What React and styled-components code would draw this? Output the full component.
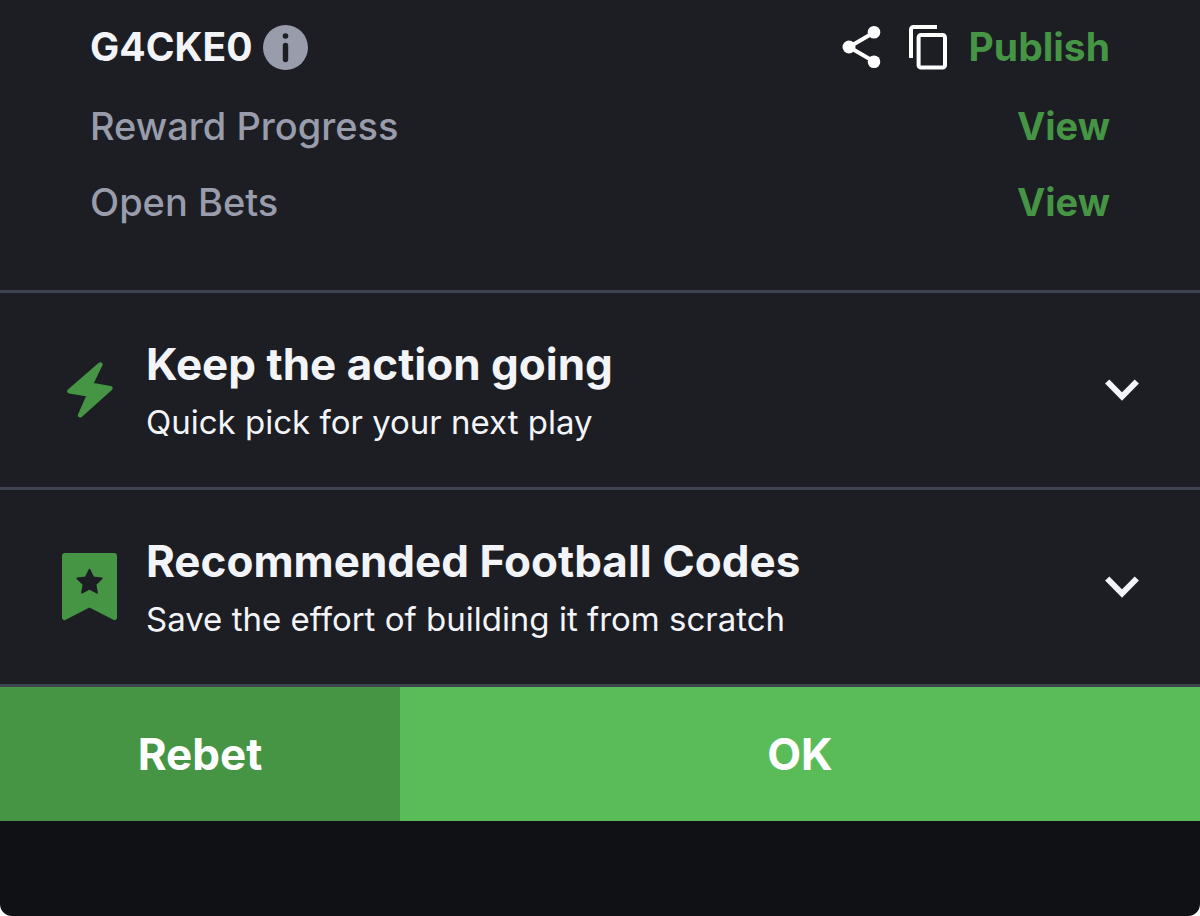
import React from "react";
import styled, { createGlobalStyle } from "styled-components";

const color = {
  panel: "#1c1e24",
  base: "#101114",
  line: "#3f424f",
  text: "#f3f4f8",
  muted: "#989cab",
  green: "#459545",
  bright: "#5abb59",
};

const GlobalStyle = createGlobalStyle`
  * { box-sizing: border-box; }
  body { margin: 0; background: #fff; }
  button { font: inherit; color: inherit; border: 0; padding: 0; background: none; cursor: pointer; }
  svg { display: block; flex: none; }
`;

const Sheet = styled.main`
  display: flex;
  flex-direction: column;
  min-height: 100vh;
  background: ${color.base};
  border-radius: 0 0 12px 12px;
  overflow: hidden;
  font-family: Inter, "Liberation Sans", sans-serif;
  color: ${color.text};
`;

const Summary = styled.section`
  display: flex;
  flex-direction: column;
  gap: 28px;
  padding: 20px 90px 64px;
  background: ${color.panel};
`;

const SummaryRow = styled.div`
  display: flex;
  align-items: center;
  justify-content: space-between;
  height: ${(p) => (p.$head ? 54 : 48)}px;
  font-size: ${(p) => (p.$head ? 39 : 38)}px;
  line-height: 48px;
`;

const Code = styled.div`
  display: flex;
  align-items: center;
  gap: 10px;
  font-weight: 700;
`;

const Actions = styled.div`
  display: flex;
  align-items: center;
`;

const IconButton = styled.button`
  margin-right: ${(p) => p.$gap || 0}px;
`;

const Label = styled.span`
  font-weight: 500;
  color: ${color.muted};
`;

const TextButton = styled.button`
  && { font-weight: 700; color: ${color.green}; }
`;

const AccordionHeader = styled.button`
  && {
    display: flex;
    align-items: center;
    gap: 29px;
    width: 100%;
    min-height: 197px;
    padding: 0 61px 0 62px;
    border-top: 3px solid ${color.line};
    background: ${color.panel};
    text-align: left;
  }
`;

const IconSlot = styled.span`
  display: flex;
  justify-content: center;
  width: 55px;
`;

const Copy = styled.span`
  display: flex;
  flex-direction: column;
  flex: 1;
  gap: 10px;
  padding-top: 2px;
`;

const Title = styled.span`
  font-size: 44px;
  line-height: 52px;
  font-weight: 700;
`;

const Subtitle = styled.span`
  font-size: 33px;
  line-height: 44px;
`;

const Footer = styled.footer`
  display: grid;
  grid-template-columns: 1fr 2fr;
  border-top: 3px solid ${color.line};
`;

const FooterButton = styled.button`
  && {
    height: 134px;
    font-size: 44px;
    font-weight: 700;
    color: #fff;
    background: ${(p) => (p.$primary ? color.bright : color.green)};
  }
`;

const InfoIcon = () => (
  <svg width="45" height="45" viewBox="0 0 45 45" aria-hidden="true">
    <circle cx="22.5" cy="22.5" r="22.5" fill={color.muted} />
    <circle cx="22.5" cy="11" r="2.8" fill={color.panel} />
    <path d="M22.5 20.5v14" stroke={color.panel} strokeWidth="5.4" strokeLinecap="round" />
  </svg>
);

const ShareIcon = () => (
  <svg width="39" height="44" viewBox="0 0 39 44" aria-hidden="true">
    <path d="M32 7.5 7 22l25 14.5" fill="none" stroke="#fff" strokeWidth="4" />
    <g fill="#fff">
      <circle cx="32" cy="7.3" r="6.3" />
      <circle cx="7" cy="22" r="6.5" />
      <circle cx="32" cy="36.8" r="6.3" />
    </g>
  </svg>
);

const CopyIcon = () => (
  <svg width="38" height="45" viewBox="0 0 38 45" fill="none" stroke="#fff" strokeWidth="4" aria-hidden="true">
    <path d="M2 33V4.5A2.5 2.5 0 0 1 4.5 2H28" />
    <rect x="9.6" y="10" width="26.4" height="32.6" rx="2.4" />
  </svg>
);

const BoltIcon = () => (
  <svg width="46" height="56" viewBox="0 0 46 56" aria-hidden="true">
    <path
      d="M33.3 2.6 2.5 29.3l19.8 3.2L13.2 53.2 43.3 26.3 23.5 22.7Z"
      fill={color.green}
      stroke={color.green}
      strokeWidth="4.6"
      strokeLinejoin="round"
    />
  </svg>
);

const BookmarkIcon = () => (
  <svg width="55" height="68" viewBox="0 0 55 68" aria-hidden="true">
    <path
      d="M3 0h49a3 3 0 0 1 3 3v61.5a2.5 2.5 0 0 1-3.7 2.3L27.5 54.5 3.7 66.8A2.5 2.5 0 0 1 0 64.5V3a3 3 0 0 1 3-3Z"
      fill={color.green}
    />
    <path
      d="m27.5 16.5 3.8 7.7 8.5 1.200-6.200 6 1.500 8.500-7.600-4-7.600 4 1.500-8.500-6.200-6 8.500-1.200Z"
      fill={color.panel}
      stroke={color.panel}
      strokeWidth="1.6"
      strokeLinejoin="round"
    />
  </svg>
);

const ChevronIcon = () => (
  <svg width="34" height="22" viewBox="0 0 34 22" aria-hidden="true">
    <path d="M2.2 2.5 17 17.5 31.8 2.5" fill="none" stroke={color.text} strokeWidth="6" />
  </svg>
);

const offers = [
  { icon: BoltIcon, title: "Keep the action going", subtitle: "Quick pick for your next play" },
  { icon: BookmarkIcon, title: "Recommended Football Codes", subtitle: "Save the effort of building it from scratch" },
];

export default function App() {
  return (
    <>
      <GlobalStyle />
      <Sheet>
        <Summary>
          <SummaryRow $head>
            <Code>
              G4CKE0
              <IconButton type="button" aria-label="Booking code information"><InfoIcon /></IconButton>
            </Code>
            <Actions>
              <IconButton type="button" aria-label="Share" $gap={28}><ShareIcon /></IconButton>
              <IconButton type="button" aria-label="Copy code" $gap={22}><CopyIcon /></IconButton>
              <TextButton type="button">Publish</TextButton>
            </Actions>
          </SummaryRow>
          {["Reward Progress", "Open Bets"].map((name) => (
            <SummaryRow key={name}>
              <Label>{name}</Label>
              <TextButton type="button" aria-label={`View ${name}`}>View</TextButton>
            </SummaryRow>
          ))}
        </Summary>
        {offers.map(({ icon: Icon, title, subtitle }) => (
          <AccordionHeader key={title} type="button" aria-expanded="false">
            <IconSlot><Icon /></IconSlot>
            <Copy>
              <Title>{title}</Title>
              <Subtitle>{subtitle}</Subtitle>
            </Copy>
            <ChevronIcon />
          </AccordionHeader>
        ))}
        <Footer>
          <FooterButton type="button">Rebet</FooterButton>
          <FooterButton type="button" $primary>OK</FooterButton>
        </Footer>
      </Sheet>
    </>
  );
}
